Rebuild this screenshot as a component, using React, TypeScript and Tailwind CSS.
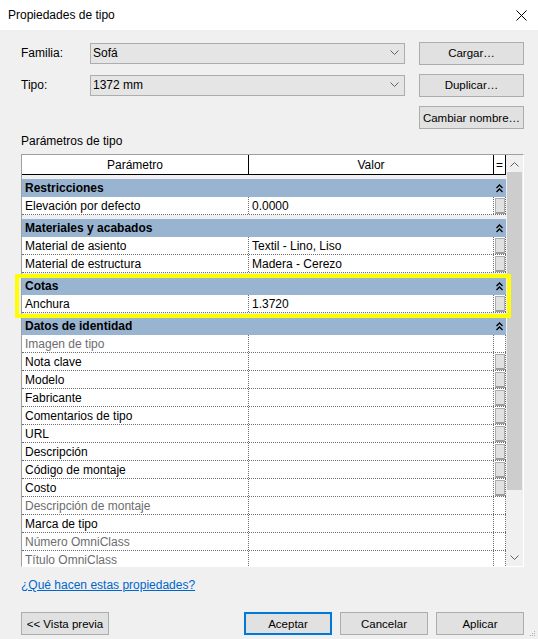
import React from 'react'

type Row = { name: string; value?: string; muted?: boolean; btn?: boolean }
type Group = { title: string; rows: Row[] }

const groups: Group[] = [
  { title: 'Restricciones', rows: [{ name: 'Elevación por defecto', value: '0.0000', btn: true }] },
  {
    title: 'Materiales y acabados',
    rows: [
      { name: 'Material de asiento', value: 'Textil - Lino, Liso', btn: true },
      { name: 'Material de estructura', value: 'Madera - Cerezo', btn: true },
    ],
  },
  { title: 'Cotas', rows: [{ name: 'Anchura', value: '1.3720', btn: true }] },
  {
    title: 'Datos de identidad',
    rows: [
      { name: 'Imagen de tipo', muted: true },
      { name: 'Nota clave', btn: true },
      { name: 'Modelo', btn: true },
      { name: 'Fabricante', btn: true },
      { name: 'Comentarios de tipo', btn: true },
      { name: 'URL', btn: true },
      { name: 'Descripción', btn: true },
      { name: 'Código de montaje', btn: true },
      { name: 'Costo', btn: true },
      { name: 'Descripción de montaje', muted: true },
      { name: 'Marca de tipo' },
      { name: 'Número OmniClass', muted: true },
      { name: 'Título OmniClass', muted: true },
    ],
  },
]

const Chevron = ({ up = false }: { up?: boolean }) => (
  <svg width="9" height="6" viewBox="0 0 9 6" className={up ? 'rotate-180' : ''}>
    <path d="M0.5 0.5 L4.5 4.5 L8.5 0.5" fill="none" stroke="#606060" strokeWidth="1" />
  </svg>
)

const Collapse = () => (
  <svg width="7" height="9" viewBox="0 0 7 9">
    <path d="M0.5 4 L3.5 1 L6.5 4 M0.5 8 L3.5 5 L6.5 8" fill="none" stroke="#000" strokeWidth="1.3" />
  </svg>
)

const Combo = ({ value }: { value: string }) => (
  <div className="flex h-[21px] flex-1 items-center justify-between border border-[#adadad] bg-[#e5e5e5] pl-[2px] pr-[5px]">
    <span>{value}</span>
    <Chevron />
  </div>
)

const Btn = ({ children, primary = false, w = 'w-[105px]' }: { children: React.ReactNode; primary?: boolean; w?: string }) => (
  <button
    className={`flex h-[23px] ${w} items-center justify-center bg-[#e1e1e1] text-[11.5px] ${
      primary ? 'border-2 border-[#0078d7]' : 'border border-[#adadad]'
    }`}
  >
    {children}
  </button>
)

const EditBtn = () => (
  <div className="mx-auto mt-[1px] h-[16px] w-[10px] border border-[#adadad] border-b-2 border-b-[#9c9c9c] bg-[#e1e1e1]" />
)

export default function App() {
  return (
    <div
      className="relative h-[639px] w-[538px] overflow-hidden bg-[#f0f0f0] text-[12px] leading-[16px] text-black"
      style={{ fontFamily: '"Segoe UI", "Liberation Sans", Arial, sans-serif' }}
    >
      {/* Title bar */}
      <div className="flex h-[30px] items-center justify-between bg-white pl-[8px] pr-[11px]">
        <span>Propiedades de tipo</span>
        <svg width="11" height="11" viewBox="0 0 11 11">
          <path d="M0.5 0.5 L10.5 10.5 M10.5 0.5 L0.5 10.5" stroke="#000" strokeWidth="1" />
        </svg>
      </div>

      <div className="flex flex-col pl-[21px] pr-[14px] pt-[12px]">
        {/* Familia / Tipo */}
        <div className="flex h-[22px] items-center">
          <span className="w-[69px]">Familia:</span>
          <Combo value="Sofá" />
          <div className="ml-[14px]">
            <Btn>Cargar…</Btn>
          </div>
        </div>
        <div className="mt-[10px] flex h-[22px] items-center">
          <span className="w-[69px]">Tipo:</span>
          <Combo value="1372 mm" />
          <div className="ml-[14px]">
            <Btn>Duplicar…</Btn>
          </div>
        </div>
        <div className="mt-[10px] flex justify-end">
          <Btn>Cambiar nombre…</Btn>
        </div>

        <div className="mt-[4px]">Parámetros de tipo</div>

        {/* Property grid */}
        <div className="relative mt-[5px] flex h-[413px] border border-[#a0a0a0] border-b-white border-r-white">
          <div className="flex w-[484px] flex-col overflow-hidden bg-[#f0f0f0]">
            <div className="flex h-[20px] shrink-0 border-b border-black bg-white">
              <div className="flex w-[227px] items-center justify-center border-r border-black">Parámetro</div>
              <div className="flex w-[245px] items-center justify-center border-r border-black">Valor</div>
              <div className="flex w-[12px] items-center justify-center border-r border-black">=</div>
            </div>
            {groups.map((g) => (
              <div key={g.title} className="shrink-0 pt-[4px]">
                <div className="flex h-[18px] items-center justify-between bg-[#99b4d1] pl-[3px] pr-[3px] font-bold">
                  <span>{g.title}</span>
                  <Collapse />
                </div>
                {g.rows.map((r) => (
                  <div key={r.name} className="flex h-[18px] border-b border-dotted border-[#6d6d6d] bg-white">
                    <div
                      className={`flex w-[227px] items-center border-r border-dotted border-[#6d6d6d] pl-[3px] ${
                        r.muted ? 'text-[#6d6d6d]' : ''
                      }`}
                    >
                      {r.name}
                    </div>
                    <div className="flex w-[245px] items-center border-r border-dotted border-[#6d6d6d] pl-[3px]">
                      {r.value}
                    </div>
                    <div className="w-[12px] border-r border-dotted border-[#6d6d6d]">{r.btn && <EditBtn />}</div>
                  </div>
                ))}
              </div>
            ))}
          </div>

          {/* Scrollbar */}
          <div className="flex w-[17px] flex-col bg-[#f0f0f0]">
            <div className="flex h-[17px] items-center justify-center">
              <Chevron up />
            </div>
            <div className="mx-[1px] h-[318px] bg-[#cdcdcd]" />
            <div className="flex-1" />
            <div className="flex h-[17px] items-center justify-center">
              <Chevron />
            </div>
          </div>

          {/* Highlight */}
          <div className="pointer-events-none absolute left-[-7px] top-[119px] h-[44px] w-[496px] border-4 border-[#ffff00]" />
        </div>

        <a className="mt-[10px] self-start text-[#0066cc] underline" href="#">
          ¿Qué hacen estas propiedades?
        </a>

        <div className="mt-[19px] flex items-center">
          <Btn w="w-[88px]">&lt;&lt; Vista previa</Btn>
          <div className="ml-auto flex gap-[8px]">
            <Btn w="w-[88px]" primary>
              Aceptar
            </Btn>
            <Btn w="w-[88px]">Cancelar</Btn>
            <Btn w="w-[88px]">Aplicar</Btn>
          </div>
        </div>
      </div>

      {/* Resize grip */}
      <svg className="absolute bottom-[2px] right-[2px]" width="6" height="6" viewBox="0 0 6 6">
        <rect x="4" y="0" width="1" height="1" fill="#b0b0b0" />
        <rect x="2" y="2" width="1" height="1" fill="#b0b0b0" />
        <rect x="4" y="2" width="1" height="1" fill="#b0b0b0" />
        <rect x="0" y="4" width="1" height="1" fill="#b0b0b0" />
        <rect x="2" y="4" width="1" height="1" fill="#b0b0b0" />
        <rect x="4" y="4" width="1" height="1" fill="#b0b0b0" />
      </svg>
    </div>
  )
}
